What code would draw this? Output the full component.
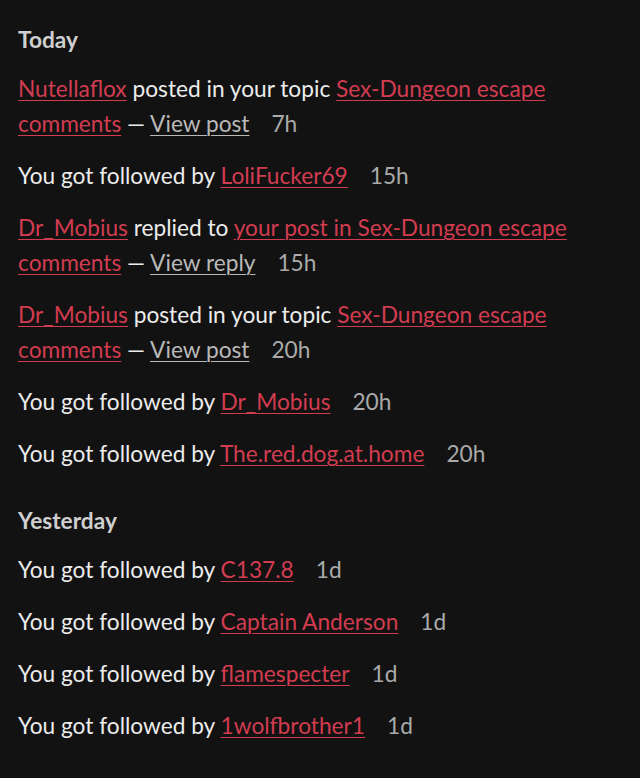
import React from 'react';

type Part = { text: string; kind?: 'link' | 'muted' };

type Notice = { parts: Part[]; time: string };

const link = (text: string): Part => ({ text, kind: 'link' });
const plain = (text: string): Part => ({ text });
const muted = (text: string): Part => ({ text, kind: 'muted' });

const today: Notice[] = [
  {
    parts: [link('Nutellaflox'), plain(' posted in your topic '), link('Sex-Dungeon escape comments'), plain(' — '), muted('View post')],
    time: '7h',
  },
  { parts: [plain('You got followed by '), link('LoliFucker69')], time: '15h' },
  {
    parts: [link('Dr_Mobius'), plain(' replied to '), link('your post in Sex-Dungeon escape comments'), plain(' — '), muted('View reply')],
    time: '15h',
  },
  {
    parts: [link('Dr_Mobius'), plain(' posted in your topic '), link('Sex-Dungeon escape comments'), plain(' — '), muted('View post')],
    time: '20h',
  },
  { parts: [plain('You got followed by '), link('Dr_Mobius')], time: '20h' },
  { parts: [plain('You got followed by '), link('The.red.dog.at.home')], time: '20h' },
];

const yesterday: Notice[] = [
  { parts: [plain('You got followed by '), link('C137.8')], time: '1d' },
  { parts: [plain('You got followed by '), link('Captain Anderson')], time: '1d' },
  { parts: [plain('You got followed by '), link('flamespecter')], time: '1d' },
  { parts: [plain('You got followed by '), link('1wolfbrother1')], time: '1d' },
];

const Row = ({ notice }: { notice: Notice }) => (
  <div className="mb-[17px] text-[#ececec]">
    {notice.parts.map((p, i) =>
      p.kind === 'link' ? (
        <a key={i} href="#" className="text-[#d23c50] underline decoration-1 underline-offset-[3px]">
          {p.text}
        </a>
      ) : p.kind === 'muted' ? (
        <a key={i} href="#" className="text-[#b9b9b9] underline decoration-1 underline-offset-[3px]">
          {p.text}
        </a>
      ) : (
        <span key={i}>{p.text}</span>
      )
    )}
    <span className="ml-[22px] text-[#aaaaaa]">{notice.time}</span>
  </div>
);

const Section = ({ title, items, first }: { title: string; items: Notice[]; first?: boolean }) => (
  <section className={first ? '' : 'pt-[15px]'}>
    <h2 className="mb-[14px] font-bold text-[#cfcfcf]">{title}</h2>
    {items.map((n, i) => (
      <Row key={i} notice={n} />
    ))}
  </section>
);

export default function App() {
  return (
    <div
      className="min-h-[778px] bg-[#121212] px-[18px] pt-[22px] text-[22.7px] leading-[35px]"
      style={{ fontFamily: 'Lato, "Open Sans", sans-serif' }}
    >
      <Section title="Today" items={today} first />
      <Section title="Yesterday" items={yesterday} />
    </div>
  );
}
